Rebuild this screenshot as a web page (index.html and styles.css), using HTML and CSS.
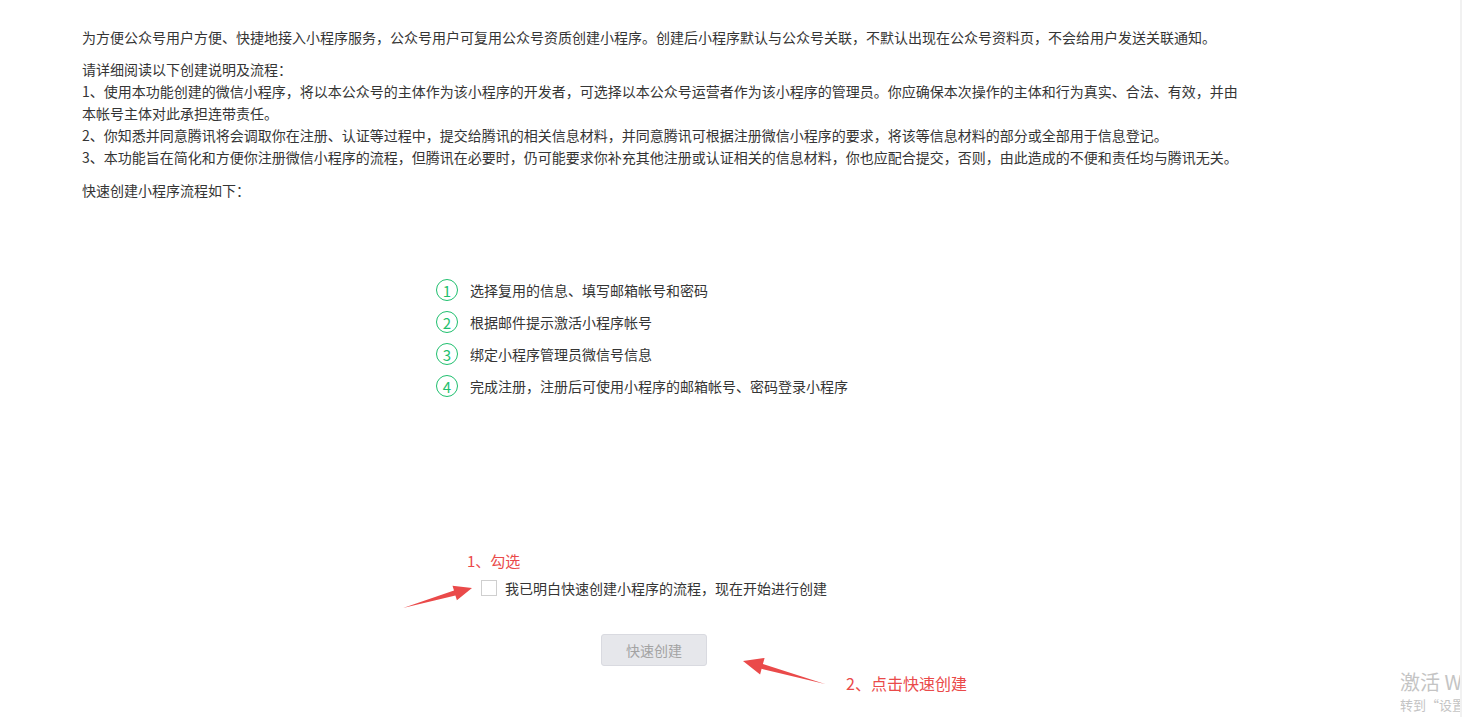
FILE: index.html
```html
<!DOCTYPE html>
<html lang="zh-CN">
<head>
<meta charset="utf-8">
<title>快速创建小程序</title>
<link rel="stylesheet" href="styles.css">
</head>
<body>
<div class="page">
  <div class="content">
    <p class="intro">为方便公众号用户方便、快捷地接入小程序服务，公众号用户可复用公众号资质创建小程序。创建后小程序默认与公众号关联，不默认出现在公众号资料页，不会给用户发送关联通知。</p>
    <p class="rules">请详细阅读以下创建说明及流程：<br>1、使用本功能创建的微信小程序，将以本公众号的主体作为该小程序的开发者，可选择以本公众号运营者作为该小程序的管理员。你应确保本次操作的主体和行为真实、合法、有效，并由本帐号主体对此承担连带责任。<br>2、你知悉并同意腾讯将会调取你在注册、认证等过程中，提交给腾讯的相关信息材料，并同意腾讯可根据注册微信小程序的要求，将该等信息材料的部分或全部用于信息登记。<br>3、本功能旨在简化和方便你注册微信小程序的流程，但腾讯在必要时，仍可能要求你补充其他注册或认证相关的信息材料，你也应配合提交，否则，由此造成的不便和责任均与腾讯无关。</p>
    <p class="flow-title">快速创建小程序流程如下：</p>

    <ol class="steps">
      <li class="step"><span class="num">1</span><span>选择复用的信息、填写邮箱帐号和密码</span></li>
      <li class="step"><span class="num">2</span><span>根据邮件提示激活小程序帐号</span></li>
      <li class="step"><span class="num">3</span><span>绑定小程序管理员微信号信息</span></li>
      <li class="step"><span class="num">4</span><span>完成注册，注册后可使用小程序的邮箱帐号、密码登录小程序</span></li>
    </ol>

    <div class="center-zone">
      <label class="agree"><span class="box"></span><span>我已明白快速创建小程序的流程，现在开始进行创建</span></label>
      <button class="btn" disabled>快速创建</button>
    </div>
  </div>

  <div class="note note-1">1、勾选</div>
  <div class="note note-2">2、点击快速创建</div>
  <svg class="arrows" width="1462" height="717" viewBox="0 0 1462 717">
    <polygon fill="#ea4a4a" points="403,608 455.4,595.4 456.9,600.2 472,588 452.5,585.8 454.0,590.6"/>
    <polygon fill="#ea4a4a" points="825,684 761.6,668.8 760.1,674.6 743,661 764.6,658.0 762.9,664.0"/>
  </svg>

  <div class="watermark">
    <div class="wm-big">激活 Windows</div>
    <div class="wm-small">转到“设置”以激活 Windows。</div>
  </div>
  <div class="edge"></div>
</div>
</body>
</html>
```

FILE: styles.css
```css
html, body {
  margin: 0;
  padding: 0;
  background: #ffffff;
}

body {
  font-family: "Microsoft YaHei", "Noto Sans CJK SC", "Noto Sans", sans-serif;
  font-size: 14px;
  color: #353535;
  overflow: hidden;
}

.page {
  position: relative;
  width: 1462px;
  height: 717px;
  overflow: hidden;
}

.content {
  width: 1160px;
  padding: 26px 0 0 82px;
}

.intro,
.rules,
.flow-title {
  margin: 0;
  line-height: 22px;
}

.rules {
  margin-top: 10px;
}

.flow-title {
  margin-top: 11px;
}

.steps {
  list-style: none;
  margin: 73px 0 0 354px;
  padding: 0;
}

.step {
  display: flex;
  align-items: center;
  height: 32px;
}

.num {
  box-sizing: border-box;
  width: 22px;
  height: 22px;
  border: 1px solid #1fbf6e;
  border-radius: 50%;
  color: #1fbf6e;
  display: flex;
  align-items: center;
  justify-content: center;
  font-size: 15px;
  margin-right: 12px;
  flex: none;
}

.center-zone {
  width: 1144px;
  display: flex;
  flex-direction: column;
  align-items: center;
  margin-top: 175px;
}

.agree {
  display: flex;
  align-items: center;
  height: 22px;
}

.box {
  box-sizing: border-box;
  width: 16px;
  height: 16px;
  border: 1px solid #cfcfcf;
  background: #fff;
  margin-right: 8px;
}

.btn {
  box-sizing: border-box;
  margin-top: 35px;
  width: 106px;
  height: 32px;
  border: 1px solid #d9dae0;
  border-radius: 3px;
  background: #e6e7eb;
  color: #a3a3a3;
  font-family: inherit;
  font-size: 14px;
  padding: 0;
}

.note {
  position: absolute;
  font-family: "Microsoft YaHei", "Noto Sans CJK SC", sans-serif;
  font-size: 15px;
  line-height: 20px;
  color: #ea4a4a;
}

.note-1 {
  left: 467px;
  top: 551px;
}

.note-2 {
  left: 846px;
  top: 673px;
  font-size: 16px;
}

.arrows {
  position: absolute;
  left: 0;
  top: 0;
  pointer-events: none;
}

.watermark {
  position: absolute;
  left: 1400px;
  top: 669px;
  color: #c4c4c4;
  white-space: nowrap;
}

.wm-big {
  font-size: 20px;
  line-height: 26px;
}

.wm-small {
  font-size: 13px;
  line-height: 20px;
}

.edge {
  position: absolute;
  left: 1460px;
  top: 0;
  width: 2px;
  height: 717px;
  background: #f1f1f1;
}
```
